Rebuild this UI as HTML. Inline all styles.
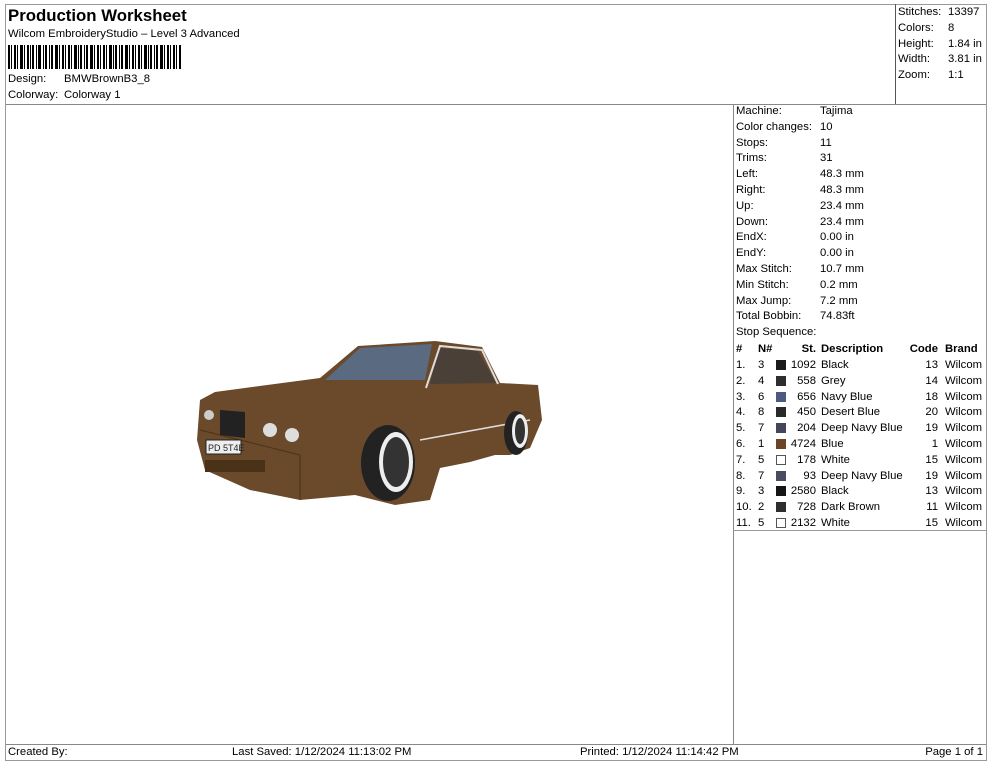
<!DOCTYPE html>
<html><head><meta charset="utf-8"><style>
*{margin:0;padding:0;box-sizing:border-box}
body{width:990px;height:762px;background:#fff;font-family:"Liberation Sans",Arial,sans-serif;font-size:11.3px;color:#000;position:relative;overflow:hidden}
.a{position:absolute;white-space:nowrap}
.hl{position:absolute;height:1px;background:#999}
.vl{position:absolute;width:1px;background:#999}
.t{position:absolute;left:736px;width:250px;height:15.8px;line-height:16px}
.t b{font-weight:normal;position:absolute}
.sw{position:absolute;left:40px;top:3px;width:10px;height:10px}
</style></head><body>
<div class="hl" style="left:5px;top:4px;width:981px"></div>
<div class="hl" style="left:5px;top:104px;width:981px;background:#888"></div>
<div class="hl" style="left:5px;top:744px;width:981px;background:#888"></div>
<div class="hl" style="left:5px;top:760px;width:981px"></div>
<div class="vl" style="left:5px;top:4px;height:757px"></div>
<div class="vl" style="left:986px;top:4px;height:757px"></div>
<div class="vl" style="left:895px;top:4px;height:100px;background:#555"></div>
<div class="vl" style="left:733px;top:104px;height:640px;background:#888"></div>
<div class="hl" style="left:733px;top:530px;width:253px"></div>

<div class="a" style="left:8px;top:6px;font-size:16.8px;font-weight:bold">Production Worksheet</div>
<div class="a" style="left:8px;top:28px">Wilcom EmbroideryStudio – Level 3 Advanced</div>
<svg class="a" style="left:8px;top:45px" width="175" height="24">
<g fill="#000">
<rect x="0" width="2" height="24"/><rect x="3" width="1" height="24"/><rect x="6" width="2" height="24"/><rect x="9" width="1" height="24"/><rect x="12" width="3" height="24"/><rect x="16" width="1" height="24"/><rect x="19" width="2" height="24"/><rect x="22" width="1" height="24"/><rect x="24" width="2" height="24"/><rect x="28" width="1" height="24"/><rect x="30" width="3" height="24"/><rect x="35" width="1" height="24"/><rect x="37" width="2" height="24"/><rect x="41" width="1" height="24"/><rect x="43" width="2" height="24"/><rect x="47" width="3" height="24"/><rect x="51" width="1" height="24"/><rect x="54" width="2" height="24"/><rect x="57" width="1" height="24"/><rect x="60" width="2" height="24"/><rect x="63" width="1" height="24"/><rect x="66" width="3" height="24"/><rect x="70" width="1" height="24"/><rect x="72" width="2" height="24"/><rect x="76" width="1" height="24"/><rect x="78" width="2" height="24"/><rect x="82" width="3" height="24"/><rect x="86" width="1" height="24"/><rect x="89" width="2" height="24"/><rect x="92" width="1" height="24"/><rect x="95" width="2" height="24"/><rect x="98" width="1" height="24"/><rect x="101" width="3" height="24"/><rect x="105" width="1" height="24"/><rect x="107" width="2" height="24"/><rect x="111" width="1" height="24"/><rect x="113" width="2" height="24"/><rect x="117" width="3" height="24"/><rect x="121" width="1" height="24"/><rect x="124" width="2" height="24"/><rect x="127" width="1" height="24"/><rect x="130" width="2" height="24"/><rect x="133" width="1" height="24"/><rect x="136" width="3" height="24"/><rect x="140" width="1" height="24"/><rect x="142" width="2" height="24"/><rect x="146" width="1" height="24"/><rect x="148" width="2" height="24"/><rect x="152" width="3" height="24"/><rect x="156" width="1" height="24"/><rect x="159" width="2" height="24"/><rect x="162" width="1" height="24"/><rect x="165" width="2" height="24"/><rect x="168" width="1" height="24"/><rect x="171" width="2" height="24"/>
</g></svg>
<div class="a" style="left:8px;top:73px">Design:</div><div class="a" style="left:64px;top:73px">BMWBrownB3_8</div>
<div class="a" style="left:8px;top:89px">Colorway:</div><div class="a" style="left:64px;top:89px">Colorway 1</div>

<div class="a" style="left:898px;top:5px;line-height:15.8px">Stitches:<br>Colors:<br>Height:<br>Width:<br>Zoom:</div>
<div class="a" style="left:948px;top:5px;line-height:15.8px">13397<br>8<br>1.84 in<br>3.81 in<br>1:1</div>

<div class="a" style="left:736px;top:104px;line-height:15.8px;padding-top:0">Machine:<br>Color changes:<br>Stops:<br>Trims:<br>Left:<br>Right:<br>Up:<br>Down:<br>EndX:<br>EndY:<br>Max Stitch:<br>Min Stitch:<br>Max Jump:<br>Total Bobbin:<br>Stop Sequence:</div>
<div class="a" style="left:820px;top:104px;line-height:15.8px">Tajima<br>10<br>11<br>31<br>48.3 mm<br>48.3 mm<br>23.4 mm<br>23.4 mm<br>0.00 in<br>0.00 in<br>10.7 mm<br>0.2 mm<br>7.2 mm<br>74.83ft</div>

<div class="t" style="top:341px;font-weight:bold;text-decoration:underline"><b style="left:0;font-weight:bold">#</b><b style="left:22px;font-weight:bold">N#</b><b style="right:170px;font-weight:bold">St.</b><b style="left:85px;font-weight:bold">Description</b><b style="right:48px;font-weight:bold">Code</b><b style="left:209px;font-weight:bold">Brand</b></div>
<div id="tb"></div>
<script>
var d=[["1.","3","#1a1a1a","1092","Black","13"],["2.","4","#2e2e2e","558","Grey","14"],["3.","6","#4a5a80","656","Navy Blue","18"],["4.","8","#2a2a2a","450","Desert Blue","20"],["5.","7","#45465a","204","Deep Navy Blue","19"],["6.","1","#6b4426","4724","Blue","1"],["7.","5","#fff","178","White","15"],["8.","7","#4a4b5e","93","Deep Navy Blue","19"],["9.","3","#151515","2580","Black","13"],["10.","2","#2e2e2e","728","Dark Brown","11"],["11.","5","#fff","2132","White","15"]];
var h="";d.forEach(function(r,i){var y=357+i*15.8;h+='<div class="t" style="top:'+y+'px"><b style="left:0">'+r[0]+'</b><b style="left:22px">'+r[1]+'</b><span class="sw" style="background:'+r[2]+';border:1px solid '+(r[2]=="#fff"?"#555":r[2])+'"></span><b style="right:170px">'+r[3]+'</b><b style="left:85px">'+r[4]+'</b><b style="right:48px">'+r[5]+'</b><b style="left:209px">Wilcom</b></div>'});
document.getElementById("tb").innerHTML=h;
</script>

<svg class="a" style="left:0;top:0" width="733" height="740" viewBox="0 0 733 740">
<path d="M200 400 L215 392 L320 378 L358 346 L435 341 L482 347 L500 383 L538 385 L542 420 L530 448 L510 455 L495 455 L470 462 L440 468 L430 500 L395 505 L355 495 L300 500 L250 490 L205 470 L197 440 Z" fill="#6a4a2a"/>
<path d="M325 380 L360 348 L432 344 L425 380 Z" fill="#5a6a80"/>
<path d="M438 348 L478 351 L496 383 L430 384 Z" fill="#4a4038"/>
<path d="M426 388 L440 346 L482 350 L498 384" fill="none" stroke="#ddd" stroke-width="2"/>
<path d="M420 440 L530 420" stroke="#ddd" stroke-width="1.5"/>
<path d="M200 430 L300 455 L300 500" fill="none" stroke="#4a3218" stroke-width="1"/>
<ellipse cx="388" cy="463" rx="27" ry="38" fill="#222"/>
<ellipse cx="396" cy="462" rx="17" ry="30" fill="#eee"/>
<ellipse cx="396" cy="462" rx="13" ry="25" fill="#333"/>
<ellipse cx="516" cy="433" rx="12" ry="22" fill="#222"/>
<ellipse cx="520" cy="431" rx="8" ry="17" fill="#eee"/>
<ellipse cx="520" cy="431" rx="5" ry="13" fill="#333"/>
<path d="M220 410 L245 412 L245 438 L220 435 Z" fill="#222"/>
<circle cx="270" cy="430" r="7" fill="#ddd"/><circle cx="292" cy="435" r="7" fill="#ddd"/>
<circle cx="209" cy="415" r="5" fill="#ccc"/>
<rect x="206" y="440" width="35" height="14" fill="#eee" stroke="#222"/>
<text x="208" y="451" font-size="9" font-family="Liberation Sans" fill="#222">PD 5T4E</text>
<rect x="205" y="460" width="60" height="12" fill="#4a3218"/>
</svg>

<div class="a" style="left:8px;top:746px">Created By:</div>
<div class="a" style="left:232px;top:746px">Last Saved: 1/12/2024 11:13:02 PM</div>
<div class="a" style="left:580px;top:746px">Printed: 1/12/2024 11:14:42 PM</div>
<div class="a" style="right:7px;top:746px">Page 1 of 1</div>
</body></html>
